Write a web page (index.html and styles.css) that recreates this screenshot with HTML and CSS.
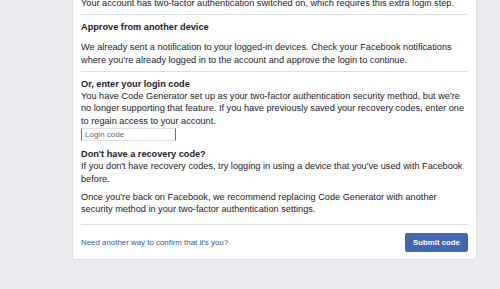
FILE: index.html
```html
<!DOCTYPE html>
<html>
<head>
<meta charset="utf-8">
<link rel="stylesheet" href="styles.css">
</head>
<body>
<div class="card">
  <div class="section intro">
    <p class="text">Your account has two-factor authentication switched on, which requires this extra login step.</p>
  </div>
  <div class="section approve">
    <h3 class="heading">Approve from another device</h3>
    <p class="text">We already sent a notification to your logged-in devices. Check your Facebook notifications where you're already logged in to the account and approve the login to continue.</p>
  </div>
  <div class="section code">
    <h3 class="heading">Or, enter your login code</h3>
    <p class="text">You have Code Generator set up as your two-factor authentication security method, but we're no longer supporting that feature. If you have previously saved your recovery codes, enter one to regain access to your account.</p>
    <input class="code-input" type="text" placeholder="Login code">
    <h3 class="heading recovery">Don't have a recovery code?</h3>
    <p class="text">If you don't have recovery codes, try logging in using a device that you've used with Facebook before.</p>
    <p class="text later">Once you're back on Facebook, we recommend replacing Code Generator with another security method in your two-factor authentication settings.</p>
  </div>
  <div class="footer">
    <a class="other-way" href="#">Need another way to confirm that it's you?</a>
    <button class="submit" type="button">Submit code</button>
  </div>
</div>
</body>
</html>
```
FILE: styles.css
```css
html, body {
  margin: 0;
  padding: 0;
  background: #e9ebee;
  font-family: "Liberation Sans", Arial, Helvetica, sans-serif;
  color: #1d2129;
}
.card {
  margin-left: 72px;
  margin-top: -12px;
  width: 405px;
  background: #fff;
  border: 1px solid #dddfe2;
  border-radius: 0 0 3px 3px;
  padding: 0 8px;
  box-sizing: border-box;
}
.section {
  border-bottom: 1px solid #dadde1;
}
.text {
  margin: 0;
  font-size: 9.2px;
  line-height: 12.3px;
}
.heading {
  margin: 0;
  font-size: 9.2px;
  line-height: 12.3px;
  font-weight: bold;
}
.intro {
  padding: 8px 0 5px;
}
.approve {
  padding: 6px 0 5px;
}
.approve .heading {
  margin-bottom: 7.7px;
}
.code {
  padding: 6px 0 8px;
}
.code-input {
  display: block;
  box-sizing: border-box;
  width: 95px;
  height: 13px;
  margin: 1px 0 0 0;
  padding: 0 3px;
  border: 1px solid #dddfe2;
  border-left-color: #dd3c4c;
  border-right-color: #dd3c4c;
  font-family: inherit;
  font-size: 8px;
  color: #1d2129;
  outline: none;
}
.code-input::placeholder {
  color: #606770;
}
.recovery {
  margin-top: 7px;
}
.later {
  margin-top: 6.2px;
}
.footer {
  display: flex;
  align-items: center;
  justify-content: space-between;
  padding: 8px 0 7px;
}
.other-way {
  font-size: 7.9px;
  color: #365899;
  text-decoration: none;
}
.submit {
  width: 63px;
  height: 19px;
  padding: 0;
  background: #4267b2;
  border: 1px solid #4267b2;
  border-radius: 2px;
  color: #fff;
  font-family: inherit;
  font-size: 7.8px;
  font-weight: bold;
}
```
